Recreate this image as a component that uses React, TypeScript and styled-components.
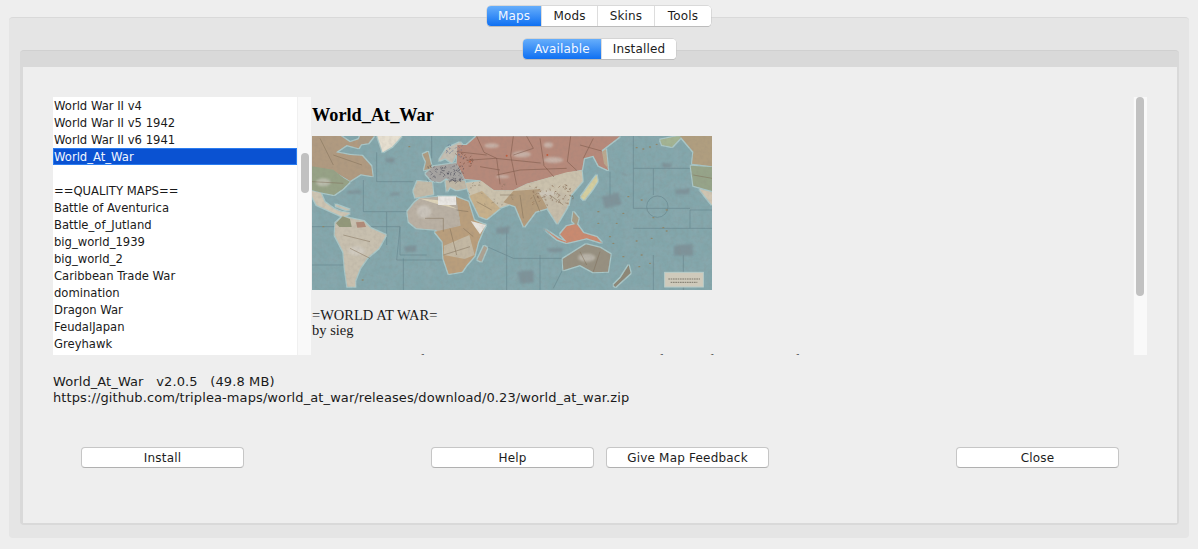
import React from "react";
import styled, { createGlobalStyle } from "styled-components";

const Global = createGlobalStyle`
  html, body { margin: 0; padding: 0; background: #eeeeee; }
  #root { width: 1198px; height: 549px; overflow: hidden; }
`;

const UI = `"DejaVu Sans", "Liberation Sans", sans-serif`;

const Page = styled.div`
  box-sizing: border-box;
  width: 1198px;
  height: 549px;
  padding: 6px 9px 11px;
  background: #eeeeee;
  font-family: ${UI};
  display: flex;
  flex-direction: column;
`;

const TabsRow = styled.div`
  display: flex;
  justify-content: center;
  height: 20px;
  margin-bottom: -9px;
  position: relative;
  z-index: 1;
  flex: none;
`;

const Segmented = styled.div`
  display: flex;
  height: 20px;
  border-radius: 4px;
  box-shadow: 0 0 0 0.5px #c4c4c4, 0 1px 0 #b4b4b4;
  background: #fff;
  overflow: hidden;
`;

const Segment = styled.div<{ $w: number; $on?: boolean }>`
  box-sizing: border-box;
  width: ${(p) => p.$w}px;
  display: flex;
  align-items: center;
  justify-content: center;
  font-size: 12px;
  letter-spacing: 0.15px;
  color: ${(p) => (p.$on ? "#f2f7ff" : "#1c1c1c")};
  background: ${(p) => (p.$on ? "linear-gradient(#66aefb, #0f70f2)" : "#ffffff")};
  & + & { border-left: 1px solid #dddddd; }
`;

const OuterPanel = styled.div`
  flex: 1;
  min-height: 0;
  box-sizing: border-box;
  background: #e5e5e5;
  border-top: 1px solid #d9d9d9;
  border-radius: 4px;
  padding: 21px 10px 13px 11px;
  display: flex;
  flex-direction: column;
`;

const InnerPanel = styled.div`
  flex: 1;
  min-height: 0;
  box-sizing: border-box;
  background: #d9d9d9;
  border-top: 1px solid #d0d0d0;
  border-radius: 4px;
  padding: 16px 2px 2px 3px;
  display: flex;
  flex-direction: column;
`;

const Content = styled.div`
  flex: 1;
  min-height: 0;
  background: #eeeeee;
  padding: 30px 30px 0 30px;
  display: flex;
  flex-direction: column;
`;

const Split = styled.div`
  display: flex;
  height: 258px;
  flex: none;
`;

const ListBox = styled.div`
  width: 244px;
  background: #ffffff;
  overflow: hidden;
  flex: none;
`;

const Row = styled.div<{ $sel?: boolean }>`
  box-sizing: border-box;
  height: 17px;
  line-height: 18px;
  padding-left: 1px;
  font-size: 11.6px;
  white-space: nowrap;
  overflow: hidden;
  color: ${(p) => (p.$sel ? "#f0f5ff" : "#1a1a1a")};
  background: ${(p) => (p.$sel ? "#0a52d2" : "transparent")};
  box-shadow: ${(p) => (p.$sel ? "inset 0 0 0 1px #2a7cf0" : "none")};
`;

const Track = styled.div<{ $top: number; $h: number; $pad: number }>`
  width: 14px;
  flex: none;
  background: #f9f9f9;
  border-left: 1px solid #f0f0f0;
  box-sizing: border-box;
  padding: ${(p) => p.$top}px 0 0 ${(p) => p.$pad}px;
  & > div { width: 8px; height: ${(p) => p.$h}px; border-radius: 4px; background: #c1c1c1; }
`;

const Html = styled.div`
  flex: 1;
  min-width: 0;
  overflow: hidden;
  background: #eeeeee;
  padding: 7px 0 0 1px;
  font-family: "Liberation Serif", serif;
  color: #111;
`;

const Title = styled.h1`
  margin: 0 0 10px;
  font-size: 18.3px;
  line-height: 22px;
  font-weight: bold;
  color: #000;
`;

const MapSvg = styled.svg`
  display: block;
  width: 400px;
  height: 154px;
`;

const Para = styled.p<{ $mt: number }>`
  margin: ${(p) => p.$mt}px 0 0;
  font-size: 14.5px;
  line-height: 15px;
  color: #1a1a1a;
  white-space: nowrap;
`;

const Info = styled.div`
  margin-top: 19px;
  font-size: 13px;
  letter-spacing: 0.1px;
  line-height: 16px;
  color: #1a1a1a;
  white-space: pre;
  flex: none;
`;

const Buttons = styled.div`
  margin: 41px 28px 0 28px;
  display: flex;
  justify-content: space-between;
  flex: none;
`;

const Group = styled.div`
  display: flex;
  gap: 12px;
`;

const Btn = styled.button`
  box-sizing: border-box;
  width: 163px;
  height: 21px;
  padding: 0;
  background: #ffffff;
  border: 1px solid #c6c6c6;
  border-bottom-color: #b0b0b0;
  border-radius: 4px;
  font-family: ${UI};
  font-size: 12px;
  letter-spacing: 0.2px;
  color: #1c1c1c;
`;

const items = [
  "World War II v4",
  "World War II v5 1942",
  "World War II v6 1941",
  "World_At_War",
  "\u00a0",
  "==QUALITY MAPS==",
  "Battle of Aventurica",
  "Battle_of_Jutland",
  "big_world_1939",
  "big_world_2",
  "Caribbean Trade War",
  "domination",
  "Dragon War",
  "FeudalJapan",
  "Greyhawk",
  "Iron War",
];

/* seeded speckle for the dense little provinces of the map */
const speckle = (n: number, x: number, y: number, w: number, h: number, seed: number, len = 8) => {
  let s = seed;
  const r = () => ((s = (s * 16807) % 2147483647) / 2147483647);
  let d = "";
  for (let i = 0; i < n; i++) {
    const a = x + r() * w;
    const b = y + r() * h;
    d += `M${a.toFixed(0)} ${b.toFixed(0)}l${((r() - 0.5) * len).toFixed(0)} ${((r() - 0.5) * len).toFixed(0)}`;
  }
  return d;
};

const land: [string, string][] = [
  ["#b09a80", "M36 123H122L150 142 196 126 176 160 140 150 108 172 150 180 186 182 214 214 218 244 182 238 150 258 100 228 36 218Z"],
  ["#aa9a84", "M180 123H222L205 145 170 150Z"],
  ["#96a286", "M36 214L100 224 130 248 150 260 128 282 102 300 60 292 36 286Z"],
  ["#cdc5b3", "M36 288L62 294 74 322 102 342 122 350 150 354 130 366 90 348 50 330 36 304Z"],
  ["#c8c1b0", "M106 328L150 344 140 346 108 334Z"],
  ["#e6dfd0", "M232 123H305L276 155 248 172Z"],
  ["#c8c0af", "M106 384L130 365 190 378 212 400 258 420 236 460 202 488 180 520 166 556 166 575 142 575 134 520 130 470 104 420Z"],
  ["#92987a", "M108 385L128 364 150 372 155 396 118 396Z"],
  ["#b08a78", "M168 382L192 380 198 396 172 398Z"],
  ["#b09c80", "M368 178L384 170 396 220 372 226 378 200Z"],
  ["#c4beb2", "M416 198L440 160 480 142 496 160 474 168 456 204 436 190Z"],
  ["#a6a4a2", "M376 236L400 214 470 204 494 256 460 262 438 250 420 262 396 258Z"],
  ["#c2baa8", "M340 288L352 258 396 262 400 298 346 308Z"],
  ["#bfb7a6", "M436 256L494 258 500 280 470 286 450 276 440 290Z"],
  ["#b6897a", "M472 150L500 150 530 124H960L905 166 925 226 896 212 880 182 852 190 846 224 790 236 680 266 640 286 582 286 540 256 494 252 470 204Z"],
  ["#cbc2ad", "M496 264L545 258 582 286 640 286 680 266 800 232 845 226 848 258 812 300 806 330 770 340 740 312 650 320 600 338 510 300Z"],
  ["#b49c7c", "M640 288L720 282 742 340 706 350 672 396 646 334 610 322Z"],
  ["#c6bdaa", "M716 292L806 296 802 336 772 386 746 346Z"],
  ["#b9b0a3", "M322 350L345 322 360 310 415 305 470 306 478 370 500 400 430 430 408 404 350 400 326 380Z"],
  ["#ded4ba", "M356 310L414 316 472 342 414 328Z"],
  ["#e9e7e3", "M414 304H468V330H414Z"],
  ["#b99e7b", "M468 306L505 320 522 376 556 390 534 442 524 482 500 510 486 530 446 537 430 490 428 440 404 410 482 392Z"],
  ["#c3b8a3", "M432 452L508 420 524 480 494 492 432 480Z"],
  ["#c6b08b", "M508 302L546 288 600 340 560 372 538 364Z"],
  ["#e8e4de", "M512 378L558 390 540 418Z"],
  ["#aca292", "M552 452L562 458 544 500 532 494Z"],
  ["#d4cfa0", "M890 240L872 264 842 306 852 316 878 282 893 258Z"],
  ["#bba98f", "M906 170L918 162 924 220 912 206Z"],
  ["#c98a70", "M730 400L778 432 800 440 780 418 800 394 830 386 850 414 890 426 906 444 860 430 800 444 772 434Z"],
  ["#a89c84", "M820 350L836 370 830 392 816 378Z"],
  ["#979080", "M788 492L858 448 900 458 932 478 924 530 880 532 840 510 790 526Z"],
  ["#8d8776", "M962 548L986 510 992 534 946 576 940 570Z"],
  ["#a3b493", "M1080 134L1130 124H1146L1116 156 1086 150Z"],
  ["#b09e7f", "M1140 123H1236V214L1176 206 1180 170Z"],
  ["#96a489", "M1172 212L1236 216V288L1180 272Z"],
  ["#cfc5b2", "M1198 282L1236 292V330Z"],
];

const isles = [
  [1010, 158], [1030, 162], [1050, 156], [1070, 148], [985, 305], [1025, 315], [1100, 345], [1060, 368], [970, 355],
  [950, 385], [895, 350], [895, 385], [1090, 398], [1100, 408], [1010, 438], [1055, 430], [1025, 480], [970, 485],
  [1050, 505], [1018, 515], [328, 155], [70, 395], [188, 555], [930, 425], [940, 445],
];

const WorldMap = () => (
  <MapSvg viewBox="36 123 1200 462" preserveAspectRatio="none" role="img" aria-label="World at War map">
    <defs>
      <filter id="coast" x="-3%" y="-3%" width="106%" height="106%">
        <feMorphology in="SourceAlpha" operator="dilate" radius="1.5" result="fat" />
        <feGaussianBlur in="fat" stdDeviation="2" result="halo" />
        <feFlood floodColor="#b2cfce" floodOpacity="0.8" />
        <feComposite in2="halo" operator="in" result="shore" />
        <feMerge>
          <feMergeNode in="shore" />
          <feMergeNode in="SourceGraphic" />
        </feMerge>
      </filter>
      <filter id="mottle" x="0" y="0" width="100%" height="100%">
        <feTurbulence type="fractalNoise" baseFrequency="0.035" numOctaves="3" seed="4" />
        <feColorMatrix values="0 0 0 0 0.3  0 0 0 0 0.42  0 0 0 0 0.46  0 0 0 1.1 -0.35" />
      </filter>
      <filter id="grain" x="0" y="0" width="100%" height="100%">
        <feTurbulence type="fractalNoise" baseFrequency="0.09" numOctaves="2" seed="9" />
        <feColorMatrix values="0 0 0 0 0.25  0 0 0 0 0.22  0 0 0 0 0.2  0 0 0 1.3 -0.5" />
      </filter>
      <filter id="blur3"><feGaussianBlur stdDeviation="3" /></filter>
      <filter id="blurAll" x="0" y="0" width="100%" height="100%"><feGaussianBlur stdDeviation="1" /></filter>
    </defs>
    <g filter="url(#blurAll)">
      <rect x="36" y="123" width="1200" height="462" fill="#82a6ab" />
      <rect x="36" y="123" width="1200" height="462" filter="url(#mottle)" opacity="0.55" />
      <g stroke="#4f6f78" strokeWidth="1.8" fill="none" opacity="0.6">
        <path d="M36 395H300V480H380M190 255V350H260V450M300 395L290 495H430M36 510H130M230 172V260H340M310 490V585M620 480V585M550 450L640 490H800M720 480V585M930 230V310M1000 220V340M1060 220V300M1170 345H1236M1170 345V400H1236M1000 400H1170M1060 480V585M1150 480V585M760 580L790 520M620 400V480M1000 340H1170M250 123V170M395 123V190M1000 123V220H1170M260 350L320 350" />
        <circle cx="1072" cy="335" r="32" />
      </g>
      <g fill="#7d9097" filter="url(#blur3)" opacity="0.85">
        <path d="M905 306L955 292 965 328 915 340ZM1122 452L1178 446 1180 482 1122 482ZM742 460L790 458 786 472 746 472ZM588 400L630 394 626 416 590 416ZM312 455L350 450 348 470 316 470ZM652 530L700 525 702 562 660 566ZM950 225L980 240 975 242ZM1085 205L1115 205 1112 218 1088 218ZM1125 285L1170 280 1168 298 1128 298ZM140 288L185 285 182 296 145 296ZM270 295L300 292 298 300 272 302ZM255 190L285 188 282 204 258 202Z" />
      </g>
      <g filter="url(#coast)">
        {land.map(([fill, d], i) => (
          <path key={i} fill={fill} d={d} />
        ))}
      </g>
      {isles.map(([x, y], i) => (
        <ellipse key={i} cx={x} cy={y} rx={3.5} ry={2} fill="#8f8567" />
      ))}
      <g fill="#d6d2cb" filter="url(#blur3)" opacity="0.55">
        <ellipse cx="575" cy="152" rx="22" ry="7" />
        <ellipse cx="665" cy="178" rx="28" ry="9" />
        <ellipse cx="745" cy="150" rx="14" ry="8" />
        <ellipse cx="760" cy="195" rx="30" ry="9" />
        <ellipse cx="608" cy="245" rx="20" ry="5" />
        <ellipse cx="372" cy="350" rx="22" ry="20" />
        <ellipse cx="170" cy="468" rx="26" ry="14" />
        <ellipse cx="70" cy="262" rx="22" ry="12" />
        <ellipse cx="860" cy="488" rx="26" ry="12" />
        <ellipse cx="740" cy="295" rx="30" ry="8" />
      </g>
      <g stroke="#7b5545" strokeWidth="2" fill="none" opacity="0.8">
        <path d="M530 124L552 172 590 190 600 268M640 124L632 182 650 270M720 130L732 212 762 246M812 124L802 200 830 226M500 196L586 190 722 204M590 240L660 225 800 220M840 150L905 168M470 170L560 180M880 130L850 190M680 124L700 160 640 180M540 215L600 225" />
      </g>
      <g stroke="#7c6c54" strokeWidth="1.8" fill="none" opacity="0.8">
        <path d="M430 480L510 455M450 400L470 480M375 370H430V410M130 420L210 440M150 460L210 490M700 300L720 350M660 300L670 370M840 470L860 510M900 470L880 530M36 260L130 265M470 345L505 350M490 400L520 425M100 180L186 210M60 130L100 210M530 320L575 345M600 300L640 300M750 300L790 330M1180 240L1236 250" />
      </g>
      <path stroke="#3f3f4c" strokeWidth="2" strokeLinecap="round" fill="none" opacity="0.75" d={speckle(80, 385, 212, 105, 50, 7)} />
      <path stroke="#54688c" strokeWidth="2" strokeLinecap="round" fill="none" opacity="0.75" d={speckle(18, 440, 150, 50, 45, 19)} />
      <path stroke="#7a5c44" strokeWidth="1.8" strokeLinecap="round" fill="none" opacity="0.75" d={speckle(70, 690, 270, 130, 60, 31)} />
      <path stroke="#7b4e40" strokeWidth="2" fill="none" opacity="0.85" d={speckle(22, 470, 175, 50, 50, 43, 14)} />
      <path stroke="#6f6250" strokeWidth="1.6" fill="none" opacity="0.6" d={speckle(24, 510, 262, 130, 70, 57, 12)} />
      <g fill="#c25a3a">
        <circle cx="620" cy="182" r="3" />
        <circle cx="742" cy="180" r="3" />
        <circle cx="510" cy="200" r="2.5" />
      </g>
      <rect x="36" y="123" width="1200" height="462" filter="url(#grain)" opacity="0.22" />
      <rect x="1094" y="532" width="116" height="44" fill="#cfcabb" stroke="#b9cdca" strokeWidth="3" />
      <path stroke="#6d675b" strokeWidth="2.5" strokeDasharray="5 2" fill="none" d="M1105 552H1200M1112 562H1192" />
    </g>
  </MapSvg>
);

export default function App() {
  return (
    <Page>
      <Global />
      <TabsRow>
        <Segmented>
          <Segment $w={54} $on>Maps</Segment>
          <Segment $w={56}>Mods</Segment>
          <Segment $w={57}>Skins</Segment>
          <Segment $w={57}>Tools</Segment>
        </Segmented>
      </TabsRow>
      <OuterPanel>
        <TabsRow>
          <Segmented>
            <Segment $w={78} $on>Available</Segment>
            <Segment $w={75}>Installed</Segment>
          </Segmented>
        </TabsRow>
        <InnerPanel>
          <Content>
            <Split>
              <ListBox>
                {items.map((t, i) => (
                  <Row key={i} $sel={t === "World_At_War"}>{t}</Row>
                ))}
              </ListBox>
              <Track $top={56} $h={40} $pad={3}><div /></Track>
              <Html>
                <Title>World_At_War</Title>
                <WorldMap />
                <Para $mt={18}>=WORLD AT WAR=<br />by sieg</Para>
                <Para $mt={15}>The world at war: fight the whole globe through the years of the conflict, with all of its lands</Para>
              </Html>
              <Track $top={0} $h={199} $pad={2}><div /></Track>
            </Split>
            <Info>{"World_At_War   v2.0.5   (49.8 MB)\nhttps://github.com/triplea-maps/world_at_war/releases/download/0.23/world_at_war.zip"}</Info>
            <Buttons>
              <Btn>Install</Btn>
              <Group>
                <Btn>Help</Btn>
                <Btn>Give Map Feedback</Btn>
              </Group>
              <Btn>Close</Btn>
            </Buttons>
          </Content>
        </InnerPanel>
      </OuterPanel>
    </Page>
  );
}
